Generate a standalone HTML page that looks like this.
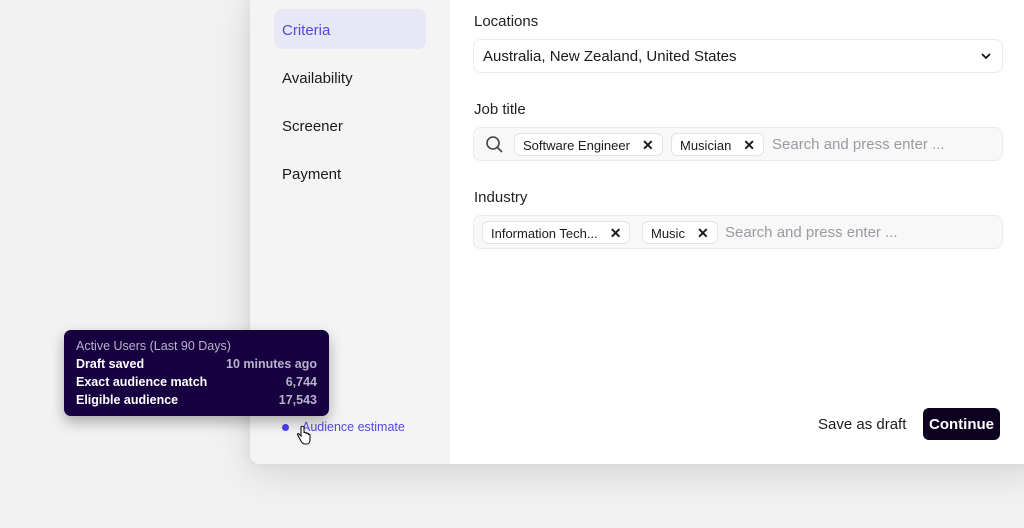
<!DOCTYPE html>
<html><head><meta charset="utf-8"><style>
*{box-sizing:border-box;margin:0;padding:0}
body{width:1024px;height:528px;background:#f2f2f3;font-family:"Liberation Sans",sans-serif;position:relative;overflow:hidden;color:#1a1a1a}
.card{position:absolute;left:250px;top:-10px;width:790px;height:474px;background:#fff;border-radius:0 0 0 10px;box-shadow:0 10px 40px rgba(0,0,0,0.12),-2px 0 10px rgba(0,0,0,0.05);overflow:hidden}
.side{position:absolute;left:0;top:0;width:200px;height:474px;background:#f4f4f5}
.nav{position:absolute;left:24px;width:152px;height:40px;border-radius:8px;font-size:15px;padding:13px 8px 0;color:#1a1a1a}
.nav.act{background:#e8e7f6;color:#5548e0}
.abs{position:absolute}
.label{font-size:15px;color:#222}
.inp{position:absolute;left:223px;width:530px;height:34px;border:1px solid #eaeaec;border-radius:8px;font-size:15px}
.chip{position:absolute;top:5px;height:23px;border:1px solid #e4e4e6;background:#fff;border-radius:6px;font-size:13px;padding:2px 8px 0;line-height:18px;color:#1a1a1a;white-space:nowrap}
.chip b{font-weight:bold;margin-left:12px;font-size:14px}
.ph{position:absolute;top:8px;color:#9a9aa2;font-size:15px}
.tip{position:absolute;left:64px;top:330px;width:265px;height:86px;background:#170040;border-radius:7px;box-shadow:0 6px 14px rgba(0,0,0,0.3);color:#fff;font-size:12.5px;font-weight:bold}
.tip div{position:absolute;left:12px;right:12px;display:flex;justify-content:space-between}
.tip span:last-child{color:#b8b3cc}
</style></head><body>
<div class="card">
 <div class="side">
  <div class="nav act" style="top:19px">Criteria</div>
  <div class="nav" style="top:67px">Availability</div>
  <div class="nav" style="top:115px">Screener</div>
  <div class="nav" style="top:163px">Payment</div>
  <div class="abs" style="left:32px;top:434px;width:7px;height:7px;border-radius:50%;background:#4b40f0"></div>
  <div class="abs" style="left:52px;top:430px;font-size:12.5px;color:#5548e0">Audience estimate</div>
 </div>
 <div class="abs label" style="left:224px;top:23px">Locations</div>
 <div class="inp" style="top:49px;background:#fff"><span class="abs" style="left:9px;top:8px">Australia, New Zealand, United States</span>
  <svg class="abs" style="right:10px;top:11px" width="12" height="10" viewBox="0 0 12 10"><path d="M2 3l4 4 4-4" fill="none" stroke="#111" stroke-width="1.8"/></svg></div>
 <div class="abs label" style="left:224px;top:111px">Job title</div>
 <div class="inp" style="top:137px;background:#f8f8f9">
  <svg class="abs" style="left:11px;top:7px" width="19" height="19" viewBox="0 0 19 19"><circle cx="8" cy="8" r="6" fill="none" stroke="#444" stroke-width="1.6"/><path d="M12.5 12.5l4.5 4.5" stroke="#444" stroke-width="1.6"/></svg>
  <div class="chip" style="left:40px">Software Engineer<b>✕</b></div>
  <div class="chip" style="left:197px">Musician<b>✕</b></div>
  <div class="ph" style="left:298px">Search and press enter ...</div>
 </div>
 <div class="abs label" style="left:224px;top:199px">Industry</div>
 <div class="inp" style="top:225px;background:#f8f8f9">
  <div class="chip" style="left:8px">Information Tech...<b>✕</b></div>
  <div class="chip" style="left:168px">Music<b>✕</b></div>
  <div class="ph" style="left:251px">Search and press enter ...</div>
 </div>
 <div class="abs" style="left:568px;top:426px;font-size:15px">Save as draft</div>
 <div class="abs" style="left:673px;top:418px;width:77px;height:32px;background:#0d0220;border-radius:6px;color:#fff;font-weight:bold;font-size:15px;text-align:center;line-height:34px">Continue</div>
</div>
<div class="tip">
 <div style="top:9px;color:#b8b3cc;font-weight:normal"><span style="color:#b8b3cc">Active Users (Last 90 Days)</span></div>
 <div style="top:27px"><span>Draft saved</span><span>10 minutes ago</span></div>
 <div style="top:45px"><span>Exact audience match</span><span>6,744</span></div>
 <div style="top:63px"><span>Eligible audience</span><span>17,543</span></div>
</div>
<svg class="abs" style="left:296px;top:425px" width="16" height="20" viewBox="0 0 16 20"><path d="M5 2v9l-2-2c-1-1-2 0-1.3 1L5 16c1 2 2 3 4 3h2c2 0 3-2 3-4v-5c0-1-1.5-1-1.5 0V9c0-1-1.5-1-1.5 0V8.5c0-1-1.5-1-1.5 0V8c0-1-1.5-1-1.5 0V2C7 1 5 1 5 2z" fill="#fff" stroke="#111" stroke-width="1.1"/></svg>
</body></html>
